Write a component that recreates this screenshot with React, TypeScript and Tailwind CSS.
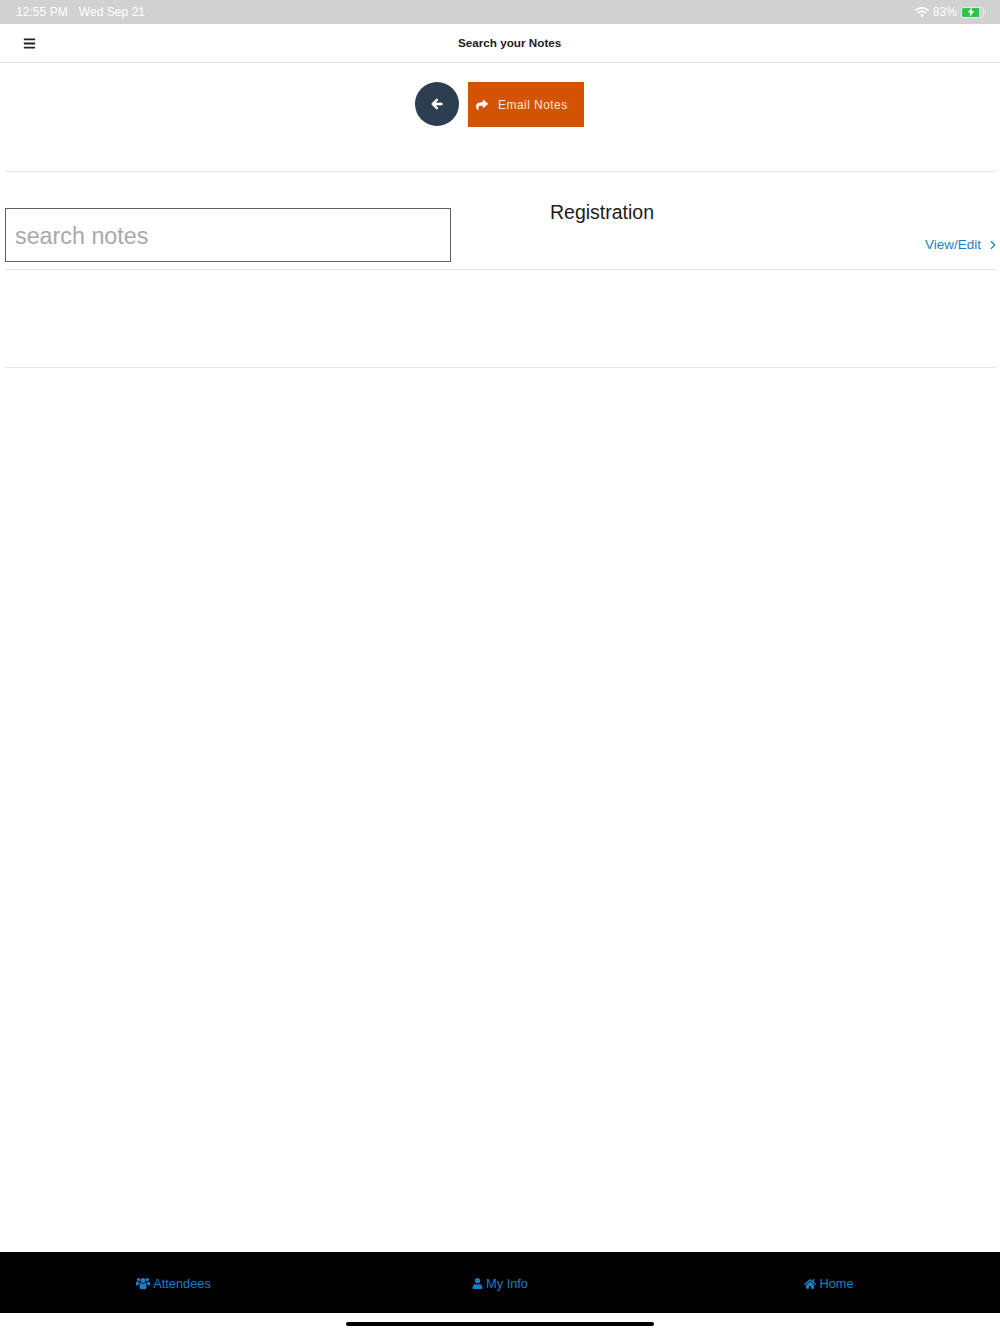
import React from 'react';
import { FaArrowLeft, FaBars, FaHome, FaShare, FaUser, FaWifi } from 'react-icons/fa';
import { FiChevronRight } from 'react-icons/fi';

const UsersIcon = () => (
  <svg width="14" height="13" viewBox="0 0 14 13" fill="currentColor">
    <circle cx="7" cy="3.6" r="2.5" />
    <circle cx="2.6" cy="2.6" r="1.7" />
    <circle cx="11.4" cy="2.6" r="1.7" />
    <path d="M3.6 7.4c0-.8.6-1.3 1.3-1.3.6.5 1.3.8 2.1.8s1.5-.3 2.1-.8c.7 0 1.3.5 1.3 1.3v3.2c0 1-.7 1.6-1.6 1.6H5.2c-.9 0-1.6-.6-1.6-1.6z" />
    <path d="M0 5.6c0-.7.5-1.2 1.1-1.2.4.4 1 .6 1.5.6h1c-.1.5.1 1-.2 1.2-.6.4-1 1-1 1.8v.6H1c-.6 0-1-.4-1-1z" />
    <path d="M14 5.6c0-.7-.5-1.2-1.1-1.2-.4.4-1 .6-1.5.6h-1c.1.5-.1 1 .2 1.2.6.4 1 1 1 1.8v.6H13c.6 0 1-.4 1-1z" />
  </svg>
);

const tabs = [
  { label: 'Attendees', icon: <UsersIcon />, box: 'w-[346px] pl-[1px]' },
  { label: 'My Info', icon: <FaUser size={11} />, box: 'w-[308px]' },
  { label: 'Home', icon: <FaHome size={12} />, box: 'w-[346px] pl-[4px]' },
];

const App: React.FC = () => {
  return (
    <div className="h-[1334px] flex flex-col bg-white font-['Liberation_Sans',Arial,sans-serif] overflow-hidden">
      {/* status bar */}
      <div className="h-6 shrink-0 bg-[#d1d1d1] flex items-center justify-between pl-4 pr-[14px] text-[12px] tracking-[0.05px] text-white">
        <div className="flex gap-[11px]">
          <span>12:55 PM</span>
          <span>Wed Sep 21</span>
        </div>
        <div className="flex items-center gap-[4px]">
          <FaWifi size={14} className="text-white" />
          <span>83%</span>
          <div className="flex items-center gap-[1px]">
            <div className="w-[23px] h-[11px] rounded-[3px] border border-[#e8e8e8] overflow-hidden">
              <div className="w-[17px] h-full bg-[#2fc34a] flex items-center justify-center">
                <svg width="8" height="10" viewBox="0 0 7 9">
                  <path d="M4.4 0 0.6 5h2.3L2.2 9 6.4 3.6H4z" fill="#fff" />
                </svg>
              </div>
            </div>
            <div className="w-[1px] h-1 bg-[#e8e8e8]" />
          </div>
        </div>
      </div>

      {/* header */}
      <div className="h-[39px] shrink-0 border-b border-[#e6e6e6] flex items-center">
        <FaBars size={13} className="ml-[23px] text-[#222]" />
        <span className="ml-[422px] text-[11.7px] font-bold text-[#1c1c1c]">Search your Notes</span>
      </div>

      {/* actions */}
      <div className="shrink-0 flex justify-center items-start gap-[9px] pt-[19px] pr-[2px] h-[109px] ml-[5px] mr-[4px] border-b border-[#e4e4e4]">
        <button className="w-11 h-11 rounded-full bg-[#2c3e50] flex items-center justify-center">
          <FaArrowLeft size={12} stroke="currentColor" strokeWidth={36} className="text-white" />
        </button>
        <button className="w-[116px] h-[45px] bg-[#d35400] flex items-center pl-2 gap-[10px] text-[12px] tracking-[0.45px] text-[#f6e6da]">
          <FaShare size={12} className="text-white" />
          <span>Email Notes</span>
        </button>
      </div>

      {/* search + note */}
      <div className="shrink-0 h-[98px] ml-[5px] mr-[4px] border-b border-[#e4e4e4] flex">
        <div className="pt-9">
          <input
            placeholder="search notes"
            className="w-[446px] h-[54px] border border-[#5f5f5f] pl-[9px] pr-[10px] pt-[2px] text-[23.3px] text-[#222] placeholder:text-[#a9a9a9] outline-none"
          />
        </div>
        <div className="flex-1 flex flex-col pl-[99px] pt-[28px]">
          <span className="text-[19.5px] leading-[24px] text-[#1c1c1c]">Registration</span>
          <div className="flex justify-end items-center gap-[5px] mt-[11px] -mr-[4px] text-[13.5px] text-[#1d7fc1]">
            <span>View/Edit</span>
            <FiChevronRight size={14} />
          </div>
        </div>
      </div>

      <div className="shrink-0 h-[98px] ml-[5px] mr-[4px] border-b border-[#e4e4e4]" />

      <div className="flex-1" />

      {/* tab bar */}
      <div className="shrink-0 h-[61px] pt-[2px] bg-black flex items-center text-[12.8px] text-[#1d7fc1]">
        {tabs.map(({ label, icon, box }) => (
          <div key={label} className={`${box} flex items-center justify-center gap-[3px]`}>
            {icon}
            <span>{label}</span>
          </div>
        ))}
      </div>

      {/* home indicator */}
      <div className="shrink-0 h-[21px] flex justify-center pt-[9px]">
        <div className="w-[308px] h-[4px] rounded-full bg-black" />
      </div>
    </div>
  );
};

export default App;
